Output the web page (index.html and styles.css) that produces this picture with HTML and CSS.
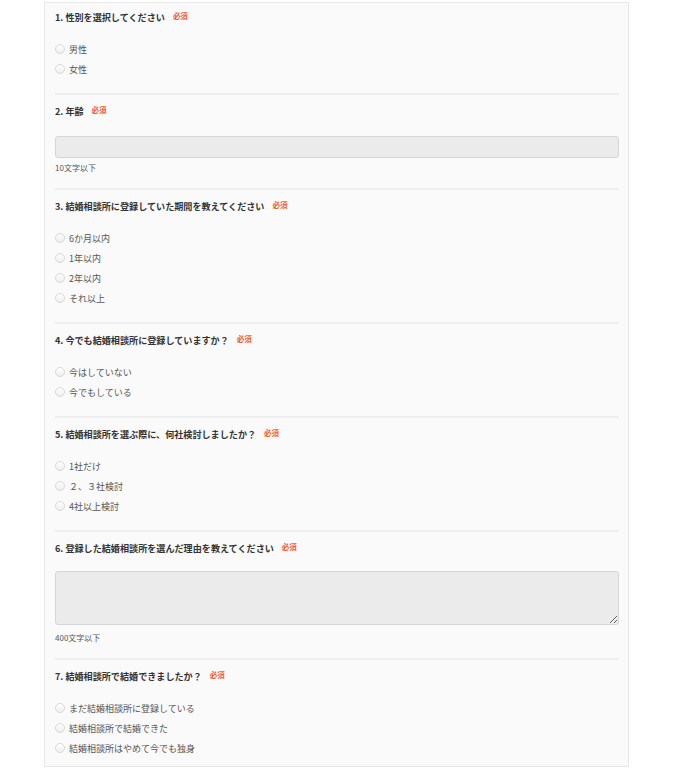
FILE: index.html
```html
<!DOCTYPE html>
<html lang="ja">
<head>
<meta charset="utf-8">
<title>アンケート</title>
<link rel="stylesheet" href="styles.css">
</head>
<body>
<div class="form">
  <section class="q">
    <h2 class="q-title">1. 性別を選択してください<span class="req">必須</span></h2>
    <ul class="options">
      <li class="opt"><span class="radio"></span>男性</li>
      <li class="opt"><span class="radio"></span>女性</li>
    </ul>
  </section>
  <section class="q">
    <h2 class="q-title">2. 年齢<span class="req">必須</span></h2>
    <input class="field" type="text">
    <p class="hint">10文字以下</p>
  </section>
  <section class="q">
    <h2 class="q-title">3. 結婚相談所に登録していた期間を教えてください<span class="req">必須</span></h2>
    <ul class="options">
      <li class="opt"><span class="radio"></span>6か月以内</li>
      <li class="opt"><span class="radio"></span>1年以内</li>
      <li class="opt"><span class="radio"></span>2年以内</li>
      <li class="opt"><span class="radio"></span>それ以上</li>
    </ul>
  </section>
  <section class="q">
    <h2 class="q-title">4. 今でも結婚相談所に登録していますか？<span class="req">必須</span></h2>
    <ul class="options">
      <li class="opt"><span class="radio"></span>今はしていない</li>
      <li class="opt"><span class="radio"></span>今でもしている</li>
    </ul>
  </section>
  <section class="q">
    <h2 class="q-title">5. 結婚相談所を選ぶ際に、何社検討しましたか？<span class="req">必須</span></h2>
    <ul class="options">
      <li class="opt"><span class="radio"></span>1社だけ</li>
      <li class="opt"><span class="radio"></span>２、３社検討</li>
      <li class="opt"><span class="radio"></span>4社以上検討</li>
    </ul>
  </section>
  <section class="q">
    <h2 class="q-title">6. 登録した結婚相談所を選んだ理由を教えてください<span class="req">必須</span></h2>
    <textarea class="area"></textarea>
    <p class="hint hint-area">400文字以下</p>
  </section>
  <section class="q q-last">
    <h2 class="q-title">7. 結婚相談所で結婚できましたか？<span class="req">必須</span></h2>
    <ul class="options">
      <li class="opt"><span class="radio"></span>まだ結婚相談所に登録している</li>
      <li class="opt"><span class="radio"></span>結婚相談所で結婚できた</li>
      <li class="opt"><span class="radio"></span>結婚相談所はやめて今でも独身</li>
    </ul>
  </section>
</div>
</body>
</html>
```

FILE: styles.css
```css
html, body {
  margin: 0;
  padding: 0;
  background: #ffffff;
}

body {
  font-family: "Noto Sans CJK JP", "Noto Sans", sans-serif;
  color: #444;
}

.form {
  width: 564px;
  margin: 2px 0 0 44px;
  padding: 0 9px 0 10px;
  background: #fafafa;
  border: 1px solid #e8e8e8;
}

.q {
  padding: 9px 0 14px;
  border-top: 2px solid #eeeeee;
}

.q:first-child {
  border-top: none;
  padding-top: 7px;
}

.q-last {
  padding-bottom: 8px;
}

.q-title {
  margin: 0;
  font-size: 9.1px;
  line-height: 14px;
  font-weight: bold;
  color: #333;
  display: flex;
  align-items: flex-start;
}

.req {
  margin-left: 8px;
  font-size: 7.5px;
  line-height: 11px;
  color: #ee5a2f;
  font-weight: bold;
}

.options {
  list-style: none;
  margin: 15px 0 0;
  padding: 0;
}

.opt {
  display: flex;
  align-items: center;
  height: 20px;
  font-size: 9px;
  color: #555;
}

.radio {
  width: 8px;
  height: 8px;
  border: 1px solid #d8d8d8;
  border-radius: 50%;
  background: linear-gradient(#ffffff, #eeeeee);
  margin-right: 4px;
  flex: none;
}

.field {
  display: block;
  box-sizing: border-box;
  width: 100%;
  height: 22px;
  margin: 18px 0 0;
  background: #ebebeb;
  border: 1px solid #d6d6d6;
  border-radius: 3px;
  padding: 0 6px;
}

.area {
  display: block;
  box-sizing: border-box;
  width: 100%;
  height: 54px;
  margin: 16px 0 0;
  background: #ebebeb;
  border: 1px solid #d6d6d6;
  border-radius: 3px;
  padding: 4px 6px;
  resize: vertical;
}

.hint {
  margin: 4px 0 0;
  font-size: 8px;
  line-height: 12px;
  color: #555;
}

.hint-area {
  margin-top: 7px;
}
```
